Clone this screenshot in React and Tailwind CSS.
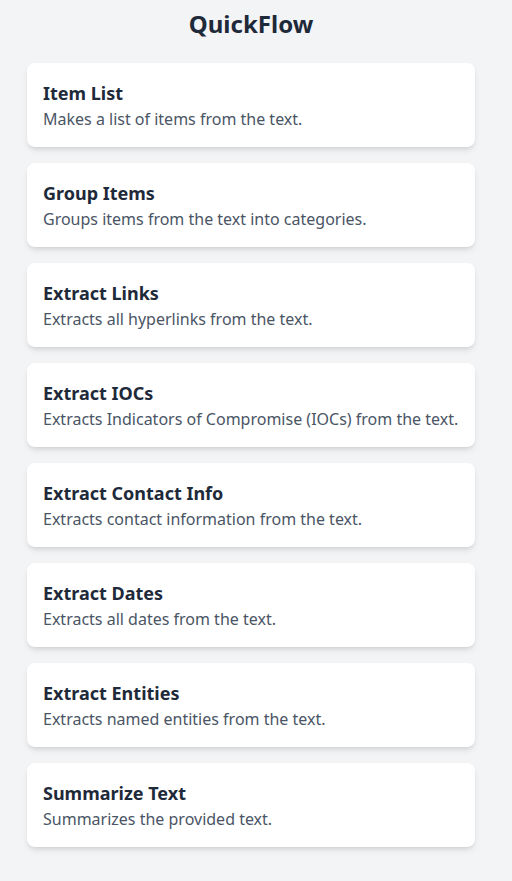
import React from 'react';

const actions = [
  { title: 'Item List', description: 'Makes a list of items from the text.' },
  { title: 'Group Items', description: 'Groups items from the text into categories.' },
  { title: 'Extract Links', description: 'Extracts all hyperlinks from the text.' },
  { title: 'Extract IOCs', description: 'Extracts Indicators of Compromise (IOCs) from the text.' },
  { title: 'Extract Contact Info', description: 'Extracts contact information from the text.' },
  { title: 'Extract Dates', description: 'Extracts all dates from the text.' },
  { title: 'Extract Entities', description: 'Extracts named entities from the text.' },
  { title: 'Summarize Text', description: 'Summarizes the provided text.' }
];

export default function App() {
  return (
    <div className="min-h-screen bg-gray-100 pt-2 pb-8 px-[27px] font-['Noto_Sans',sans-serif]">
      <h1 className="text-2xl font-bold text-gray-800 text-center w-[448px] mb-[23px]">QuickFlow</h1>
      <div className="w-[448px] flex flex-col gap-4">
        {actions.map((item, index) => (
          <div key={index} className="bg-white rounded-lg shadow-md p-4">
            <h2 className="text-lg font-bold text-gray-800">{item.title}</h2>
            <p className="text-base text-gray-600">{item.description}</p>
          </div>
        ))}
      </div>
    </div>
  );
}
